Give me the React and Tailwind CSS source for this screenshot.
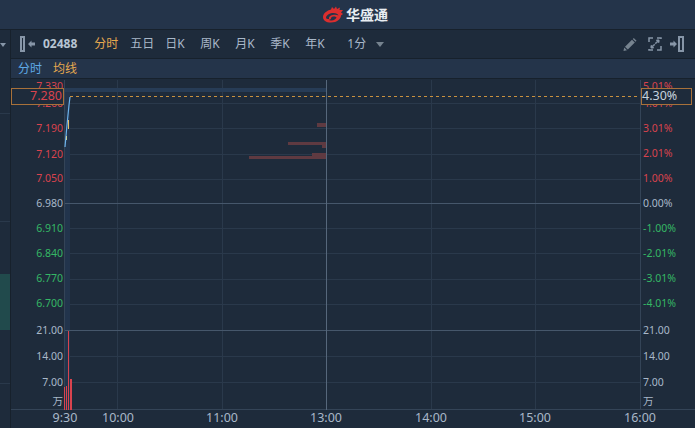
const font = { fontFamily: '"Noto Sans", "Noto Sans CJK SC", sans-serif' };

const periods = ['五日', '日K', '周K', '月K', '季K', '年K'];

const red = 'text-[#d9434e]';
const green = 'text-[#35b765]';
const gray = 'text-[#a9b8c9]';

const leftLabels = [
  ['7.330', 86, red],
  ['7.260', 103, red],
  ['7.190', 128, red],
  ['7.120', 154, red],
  ['7.050', 178, red],
  ['6.980', 203, gray],
  ['6.910', 228, green],
  ['6.840', 253, green],
  ['6.770', 278, green],
  ['6.700', 303, green],
  ['21.00', 330, gray],
  ['14.00', 356, gray],
  ['7.00', 382, gray],
  ['万', 401, gray],
];

const rightLabels = [
  ['5.01%', 86, red],
  ['4.01%', 103, red],
  ['3.01%', 128, red],
  ['2.01%', 153, red],
  ['1.00%', 178, red],
  ['0.00%', 203, gray],
  ['-1.00%', 228, green],
  ['-2.01%', 253, green],
  ['-3.01%', 278, green],
  ['-4.01%', 303, green],
  ['21.00', 330, gray],
  ['14.00', 356, gray],
  ['7.00', 382, gray],
  ['万', 401, gray],
];

const times = [
  ['9:30', 65],
  ['10:00', 118],
  ['11:00', 222],
  ['13:00', 326],
  ['14:00', 431],
  ['15:00', 535],
  ['16:00', 640],
];

const hLines = [103, 128, 154, 179, 228, 253, 279, 304, 356, 382];
const vLines = [117, 222, 431, 535];

function Logo() {
  return (
    <svg width="22" height="17" viewBox="0 0 22 17" fill="none">
      <path d="M1 11C1 7.500 5 4.500 9 3.500L10 1L12 3L14 0.500L15 3L18 1.500L17.500 4L21 4L19 6.500L21 8L19 9.500C19 13 15 16.500 9 16.500C4 16.500 1 14.500 1 11Z" fill="#dc2e2e" />
      <path d="M4 11.500C4.500 9 8 7 11.500 7C14 7 16 8 16.500 9.500C15 8.500 12.500 8.500 10.500 9C8 9.500 6.500 11 7 13C5 13 4 12.500 4 11.500Z" fill="#24344a" />
      <path d="M9 12.500C9 11 10.500 10.500 12 10.500C13 10.500 14 10.800 14.500 11.500C14 13 12 14.500 9.500 14.500C8 14.500 7 14.200 6.500 13.800C7.500 13.800 9 13.500 9 12.500Z" fill="#24344a" />
    </svg>
  );
}

function PanelLeft() {
  return (
    <svg width="17" height="16" viewBox="0 0 17 16" fill="none">
      <rect x="2" y="1" width="3" height="14" stroke="#8796a8" strokeWidth="2" />
      <path d="M9 8L12.500 4.500V6.500H16V9.500H12.500V11.500Z" fill="#8796a8" />
    </svg>
  );
}

function PanelRight() {
  return (
    <svg width="14" height="16" viewBox="0 0 14 16" fill="none">
      <path d="M7 8L3.500 4.500V6.500H0V9.500H3.500V11.500Z" fill="#8796a8" />
      <rect x="9" y="1" width="4" height="14" stroke="#8796a8" strokeWidth="2" />
    </svg>
  );
}

function Pencil() {
  return (
    <svg width="14" height="15" viewBox="0 0 14 14" fill="#76838f">
      <path d="M0.500 13.500L1.200 10L4 12.800Z" />
      <path d="M2 9.200L9 2.200L11.800 5L4.800 12Z" />
      <path d="M9.800 1.400L10.800 0.500L13.500 3.200L12.500 4.200Z" />
    </svg>
  );
}

function Expand() {
  return (
    <svg width="14" height="14" viewBox="0 0 14 14" fill="none">
      <path d="M8.500 3H11V5.500L9.800 4.700L7.800 6.700L7.300 6.200L9.300 4.200Z" fill="#8796a8" stroke="#8796a8" />
      <path d="M5.500 11H3V8.500L4.200 9.300L6.200 7.300L6.700 7.800L4.700 9.800Z" fill="#8796a8" stroke="#8796a8" />
      <path d="M1 5V1H5M9 1H13V2M13 9V13H9M5 13H1V12" stroke="#8796a8" strokeWidth="1.500" />
    </svg>
  );
}

function Chart() {
  return (
    <svg className="absolute left-0 top-0" width="695" height="428">
      {hLines.map((y) => (
        <line key={y} x1="64" x2="640" y1={y + 0.5} y2={y + 0.5} stroke="#2a394b" />
      ))}
      {vLines.map((x) => (
        <line key={x} x1={x + 0.5} x2={x + 0.5} y1="80" y2="410" stroke="#2a394b" />
      ))}
      <rect x="64" y="88" width="263" height="4" fill="#273c56" />
      <rect x="64" y="92" width="6" height="318" fill="#22344c" />
      <line x1="64" x2="640" y1="203.500" y2="203.500" stroke="#46576b" />
      <line x1="64" x2="640" y1="330.500" y2="330.500" stroke="#46576b" />
      <line x1="11" x2="695" y1="409.500" y2="409.500" stroke="#344457" />
      <line x1="64.500" x2="64.500" y1="80" y2="410" stroke="#344457" />
      <line x1="640.500" x2="640.500" y1="80" y2="410" stroke="#344457" />
      <line x1="326.500" x2="326.500" y1="80" y2="410" stroke="#56677b" />
      <rect x="317" y="123" width="9" height="4" fill="#5f3a41" />
      <rect x="288" y="142" width="38" height="3" fill="#5f3a41" />
      <rect x="322" y="145" width="4" height="3" fill="#5f3a41" />
      <rect x="312" y="153" width="14" height="3" fill="#5f3a41" />
      <rect x="249" y="156" width="77" height="3" fill="#5f3a41" />
      <line x1="70" x2="640" y1="96.500" y2="96.500" stroke="#c9913f" strokeDasharray="3 3" />
      <path d="M65 147L67 125L69 105L70 97" stroke="#6db3ec" strokeWidth="1.200" fill="none" />
      <rect x="68" y="120" width="1" height="9" fill="#e3c06c" />
      <rect x="66" y="136" width="1" height="4" fill="#c8cfa0" />
      <rect x="64" y="387" width="1" height="23" fill="#d9434e" />
      <rect x="66" y="386" width="1" height="24" fill="#d9434e" />
      <rect x="68" y="331" width="1" height="79" fill="#d9434e" />
      <rect x="70" y="379" width="2" height="31" fill="#d9434e" />
    </svg>
  );
}

export default function App() {
  return (
    <div className="flex h-[428px] w-[695px] flex-col overflow-hidden bg-[#1e2b3b] text-[12px] text-[#a9b8c9]" style={font}>
      <header className="flex h-[30px] shrink-0 items-center justify-center gap-[2px] border-b border-[#17212c] bg-[#24344a] pl-[15px]">
        <Logo />
        <span className="text-[14px] font-bold text-[#e8edf2]">华盛通</span>
      </header>
      <div className="flex min-h-0 flex-1">
        <aside className="relative w-[11px] shrink-0 border-r border-[#17212c]">
          <span className="absolute left-0 top-[13px] h-0 w-0 border-x-[3px] border-t-[4px] border-x-transparent border-t-[#8796a8]" />
          <div className="absolute left-0 top-[83px] h-px w-[10px] bg-[#2a394b]" />
          <div className="absolute left-0 top-[191px] h-px w-[10px] bg-[#2a394b]" />
          <div className="absolute left-0 top-[244px] h-[56px] w-[10px] bg-[#214a4c]" />
          <div className="absolute left-0 top-[353px] h-px w-[10px] bg-[#2a394b]" />
        </aside>
        <main className="flex min-w-0 flex-1 flex-col">
          <nav className="flex h-[29px] shrink-0 items-center border-b border-[#17212c] pl-[8px] pr-[11px]">
            <PanelLeft />
            <span className="ml-[7px] font-bold text-[#b8c5d3]">02488</span>
            <span className="ml-[17px] text-[#e6a94f]">分时</span>
            <div className="ml-[12px] flex">
              {periods.map((p) => (
                <span key={p} className="w-[35px]">{p}</span>
              ))}
            </div>
            <span className="ml-[7px]">1分</span>
            <span className="ml-[10px] h-0 w-0 border-x-[4px] border-t-[5px] border-x-transparent border-t-[#76838f]" />
            <div className="ml-auto flex items-center">
              <Pencil />
              <span className="ml-[11px]"><Expand /></span>
              <span className="ml-[8px]"><PanelRight /></span>
            </div>
          </nav>
          <div className="flex h-[20px] shrink-0 items-center gap-[11px] border-b border-[#17212c] bg-[#24344a] pl-[7px]">
            <span className="text-[#5ea9e6]">分时</span>
            <span className="text-[#e6a94f]">均线</span>
          </div>
          <div className="flex-1" />
        </main>
      </div>
      <Chart />
      {leftLabels.map(([t, y, c]) => (
        <span key={t + y} className={`absolute right-[632px] -translate-y-1/2 text-[10.5px] leading-none ${c}`} style={{ top: y }}>{t}</span>
      ))}
      {rightLabels.map(([t, y, c]) => (
        <span key={t + y} className={`absolute left-[643px] -translate-y-1/2 text-[10.5px] leading-none ${c}`} style={{ top: y }}>{t}</span>
      ))}
      {times.map(([t, x]) => (
        <span key={t} className="absolute top-[418px] -translate-x-1/2 -translate-y-1/2 text-[12.5px] leading-none" style={{ left: x }}>{t}</span>
      ))}
      <div className="absolute left-[11px] top-[88px] flex h-[17px] w-[53px] items-center justify-end border border-[#a8713a] bg-[#1e2b3b] pr-[1px] text-[12.5px] leading-none text-[#d9434e]">7.280</div>
      <div className="absolute left-[641px] top-[88px] flex h-[17px] w-[51px] items-center border border-[#a8713a] bg-[#1e2b3b] text-[12.5px] leading-none text-[#c6d2de]">4.30%</div>
    </div>
  );
}
